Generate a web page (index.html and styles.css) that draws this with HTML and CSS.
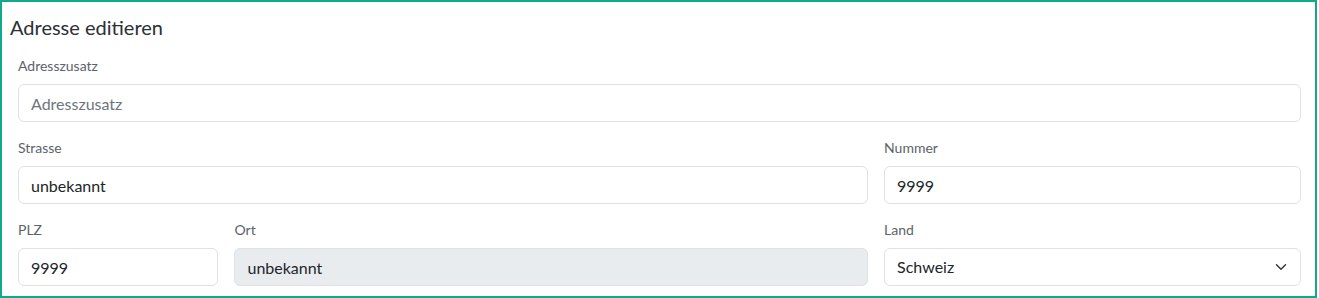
FILE: index.html
```html
<html lang="de">
<head>
  <meta charset="UTF-8">
  <meta name="viewport" content="width=device-width, initial-scale=1.0">
  <title>Adresse editieren</title>
  <link rel="stylesheet" href="styles.css">
</head>
<body>
  <div class="card">
    <div class="card-header">Adresse editieren</div>
    <div class="card-body">
      <div class="field">
        <label class="form-label" for="zusatz">Adresszusatz</label>
        <input type="text" id="zusatz" class="form-control" placeholder="Adresszusatz">
      </div>

      <div class="row row-street">
        <div class="field">
          <label class="form-label" for="strasse">Strasse</label>
          <input type="text" id="strasse" class="form-control" value="unbekannt">
        </div>
        <div class="field">
          <label class="form-label" for="nummer">Nummer</label>
          <input type="text" id="nummer" class="form-control" value="9999">
        </div>
      </div>

      <div class="row row-place">
        <div class="field">
          <label class="form-label" for="plz">PLZ</label>
          <input type="text" id="plz" class="form-control" value="9999">
        </div>
        <div class="field">
          <label class="form-label" for="ort">Ort</label>
          <input type="text" id="ort" class="form-control" value="unbekannt" disabled>
        </div>
        <div class="field">
          <label class="form-label" for="land">Land</label>
          <div class="select-wrap">
            <select id="land" class="form-select">
              <option selected>Schweiz</option>
              <option>Deutschland</option>
              <option>Österreich</option>
            </select>
            <!-- Pfeil wie bei Bootstrap -->
            <svg class="chevron" width="12" height="12" viewBox="0 0 16 16">
              <path d="M2 5l6 6 6-6" fill="none" stroke="#343a40" stroke-width="2" stroke-linecap="round" stroke-linejoin="round"/>
            </svg>
          </div>
        </div>
      </div>
    </div>
  </div>
</body>
</html>
```

FILE: styles.css
```css
body {
  margin: 0;
  padding: 0;
  font-family: Lato, "Liberation Sans", sans-serif;
  color: #212529;
  background-color: white;
}

.card {
  width: calc(100% - 2px);
  height: 298px;
  box-sizing: border-box;
  border: 2px solid #12a98a; /* grüner Rahmen */
  background-color: white;
  overflow: hidden;
}

.card-header {
  padding: 13px 8px 0 8px;
  font-size: 20px;
  line-height: 24px;
  color: #2b3035;
}

.card-body {
  padding: 17px 14px 0 16px;
}

.field {
  margin-bottom: 16px;
  min-width: 0;
}

.row {
  display: grid;
  column-gap: 16px;
}

.row-street {
  grid-template-columns: 1fr calc((100% + 16px) / 3 - 16px);
}

.row-place {
  grid-template-columns: calc((100% + 16px) / 6 - 16px) 1fr calc((100% + 16px) / 3 - 16px);
}

.form-label {
  display: block;
  margin-bottom: 8px;
  font-size: 14px;
  line-height: 20px;
  color: #5c636a;
}

.form-control,
.form-select {
  display: block;
  width: 100%;
  height: 38px;
  box-sizing: border-box;
  padding: 6px 12px;
  font-family: inherit;
  font-size: 16px;
  line-height: 24px;
  color: #212529;
  background-color: white;
  border: 1px solid #dee2e6;
  border-radius: 6px;
  outline: none;
}

.form-control::placeholder {
  color: #6c757d;
}

.form-control:disabled {
  background-color: #e9ecef;
  opacity: 1;
}

.select-wrap {
  position: relative;
}

.form-select {
  appearance: none;
  padding-right: 36px;
}

.chevron {
  position: absolute;
  right: 14px;
  top: 13px;
  pointer-events: none;
}
```
